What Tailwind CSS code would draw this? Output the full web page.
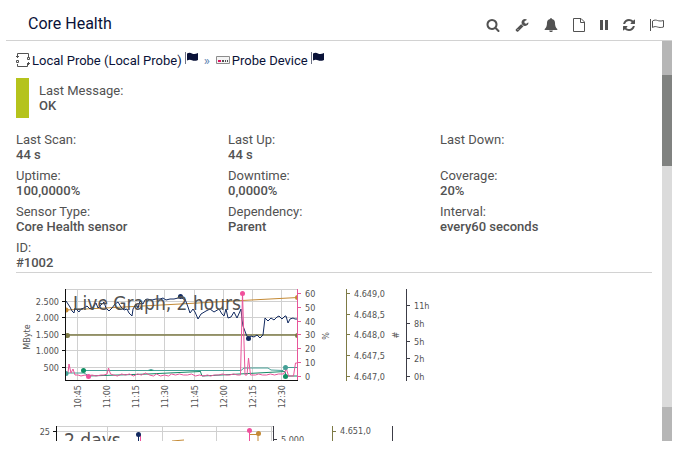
<!DOCTYPE html>
<html lang="en">
<head>
    <meta charset="UTF-8">
    <meta name="viewport" content="width=device-width, initial-scale=1.0">
    <title>Core Health</title>
    <script src="https://cdn.jsdelivr.net/npm/@tailwindcss/browser@4"></script>
</head>
<body class="bg-white h-screen flex flex-col px-[6px] pb-[10px] overflow-hidden font-['Roboto',sans-serif] text-[13px] leading-[15px] text-[#525252]">
    <header class="flex items-center justify-between shrink-0 h-[41px] pt-2 pl-[22px] pr-2 border-b border-[#d2d2d2]">
        <h1 class="text-base text-[#0a1238]">Core Health</h1>
        <div class="flex items-center gap-[15px] pt-[2px]">
            <button type="button" aria-label="Search">
                <svg class="w-[14px] h-[14px]" viewBox="0 0 1792 1792" fill="currentColor"><path d="M1216 832q0-185-131.5-316.5t-316.5-131.5-316.5 131.5-131.5 316.5 131.5 316.5 316.5 131.5 316.5-131.5 131.5-316.5zm512 832q0 52-38 90t-90 38q-54 0-90-38l-343-342q-179 124-399 124-143 0-273.5-55.5t-225-150-150-225-55.5-273.5 55.5-273.5 150-225 225-150 273.5-55.5 273.5 55.5 225 150 150 225 55.5 273.5q0 220-124 399l343 343q37 37 37 90z"/></svg>
            </button>
            <button type="button" aria-label="Settings">
                <svg class="w-[14px] h-[14px]" viewBox="0 0 1792 1792" fill="currentColor"><path d="M448 1472q0-26-19-45t-45-19-45 19-19 45 19 45 45 19 45-19 19-45zm644-420l-682 682q-37 37-90 37-52 0-91-37l-106-108q-38-36-38-90 0-53 38-91l681-681q39 98 114.5 173.5t173.5 114.5zm634-435q0 39-23 106-47 134-164.5 217.5t-258.5 83.5q-185 0-316.5-131.5t-131.5-316.5 131.5-316.5 316.5-131.5q58 0 121.5 16.5t107.5 46.5q16 11 16 28t-16 28l-293 169v224l193 107q5-3 79-48.5t135.5-81 70.5-35.5q15 0 23.5 10t8.5 25z"/></svg>
            </button>
            <button type="button" aria-label="Notifications">
                <svg class="w-[14px] h-[14px]" viewBox="0 0 14 14" fill="currentColor"><path d="M7 0c.6 0 .9.4.9.9 2 .4 3.1 1.9 3.1 3.9 0 3 .6 5 2.5 6.4 0 .5-.3.8-.8.8H1.3c-.5 0-.8-.3-.8-.8C2.4 9.800 3 7.800 3 4.800c0-2 1.100-3.500 3.100-3.900C6.100.4 6.400 0 7 0zM5.200 12.500h3.600c0 1-.8 1.500-1.800 1.500s-1.800-.5-1.800-1.500z"/></svg>
            </button>
            <button type="button" aria-label="Report">
                <svg class="w-[12px] h-[14px]" viewBox="0 0 12 14" fill="none" stroke="currentColor"><path d="M.5.5h7.500l3.500 3.500v9.500H.5zM7.500.5v4h4"/></svg>
            </button>
            <button type="button" aria-label="Pause">
                <svg class="w-[8px] h-[14px]" viewBox="0 0 8 14" fill="currentColor"><path d="M0 2h3v10H0zM5 2h3v10H5z"/></svg>
            </button>
            <button type="button" aria-label="Refresh">
                <svg class="w-[12px] h-[14px]" viewBox="128 0 1536 1792" fill="currentColor"><path d="M1639 1056q0 5-1 7-64 268-268 434.5t-478 166.5q-146 0-282.5-55t-243.5-157l-129 129q-19 19-45 19t-45-19-19-45v-448q0-26 19-45t45-19h448q26 0 45 19t19 45-19 45l-137 137q71 66 161 102t187 36q134 0 250-65t186-179q11-17 53-117 8-23 30-23h192q13 0 22.5 9.5t9.5 22.5zm25-800v448q0 26-19 45t-45 19h-448q-26 0-45-19t-19-45 19-45l138-138q-148-137-349-137-134 0-250 65t-186 179q-11 17-53 117-8 23-30 23h-199q-13 0-22.5-9.5t-9.5-22.5v-7q65-268 270-434.5t480-166.5q146 0 284 55.5t245 156.5l130-129q19-19 45-19t45 19 19 45z"/></svg>
            </button>
            <button type="button" aria-label="Flag">
                <svg class="w-[14px] h-[14px]" viewBox="0 0 14 14" fill="none" stroke="currentColor"><path d="M.5 1v12"/><path d="M2.500 3c2-1.300 3.500-1 5-.5s3.500.8 6 0v6.500c-2.500.8-4.500.5-6 0s-3-.8-5 .5z"/></svg>
            </button>
        </div>
    </header>

    <div class="flex flex-1 min-h-0">
        <main class="flex-1 min-w-0 overflow-hidden px-[10px] pt-[11px]">
            <nav class="flex items-center h-4 text-[#0a1238]" aria-label="Breadcrumb">
                <svg class="w-[14px] h-[14px] mr-[2px]" viewBox="0 0 14 14" fill="none" stroke="#525252"><path d="M1.500 3V.5h11V4M1.500 11v2.500h10V11"/><path d="M0 3.500h3M1.500 2v3M.5 7.500h2v2h-2zM11.500 4.500h2v2h-2zM11 10.500h3M12.500 9v3"/></svg>
                <a href="#">Local Probe (Local Probe)</a>
                <svg class="w-[13px] h-[12px] ml-[3px] mb-1" viewBox="0 0 13 12"><path d="M0 0h1v12H0z" fill="#6d7285"/><path d="M2 1.500c2-1 3.500-.8 5 0s3.500.8 6-.5v7c-2.500 1.200-4.500 1-6 .3s-3-.8-5 .2z" fill="#0a1238"/></svg>
                <span class="mx-[6px] text-[#5b7fb0]">»</span>
                <svg class="w-[14px] h-[8px] mr-[2px]" viewBox="0 0 14 8"><path d="M.5.5h13v7H.5z" fill="#f4f4f4" stroke="#8c8c8c"/><path d="M2 4h3v2H2z" fill="#e0115f"/><path d="M6 4h2v2H6zM9 4h1v2H9zM11 4h1v2h-1z" fill="#525252"/></svg>
                <a href="#">Probe Device</a>
                <svg class="w-[13px] h-[12px] ml-[3px] mb-1" viewBox="0 0 13 12"><path d="M0 0h1v12H0z" fill="#6d7285"/><path d="M2 1.500c2-1 3.500-.8 5 0s3.500.8 6-.5v7c-2.500 1.200-4.500 1-6 .3s-3-.8-5 .2z" fill="#0a1238"/></svg>
            </nav>

            <div class="flex items-center mt-[10px]">
                <div class="w-[13px] h-10 bg-[#b5c31c] mr-[10px]"></div>
                <div>
                    <p>Last Message:</p>
                    <p class="font-medium">OK</p>
                </div>
            </div>

            <dl class="grid grid-cols-3 gap-y-[6px] mt-[14px] pb-[2px] border-b border-[#d2d2d2]">
                <div><dt>Last Scan:</dt><dd class="font-medium">44 s</dd></div>
                <div><dt>Last Up:</dt><dd class="font-medium">44 s</dd></div>
                <div><dt>Last Down:</dt><dd class="font-medium"></dd></div>
                <div><dt>Uptime:</dt><dd class="font-medium">100,0000%</dd></div>
                <div><dt>Downtime:</dt><dd class="font-medium">0,0000%</dd></div>
                <div><dt>Coverage:</dt><dd class="font-medium">20%</dd></div>
                <div><dt>Sensor Type:</dt><dd class="font-medium">Core Health sensor</dd></div>
                <div><dt>Dependency:</dt><dd class="font-medium">Parent</dd></div>
                <div><dt>Interval:</dt><dd class="font-medium">every60 seconds</dd></div>
                <div><dt>ID:</dt><dd class="font-medium">#1002</dd></div>
            </dl>

            <!-- Live graph -->
            <svg class="block mt-2 w-[420px] h-[136px] font-['DejaVu_Sans_Condensed','DejaVu_Sans',sans-serif] text-[9px]" viewBox="16 281 420 136" fill="#525252">
                <clipPath id="livePlot"><path d="M66 289h232v92H66z"/></clipPath>
                <path d="M66 289.500h232M66 301.500h232M66 317.500h232M66 334.500h232M66 350.500h232M66 367.500h232M77.500 289v91M106.500 289v91M135.500 289v91M164.500 289v91M194.500 289v91M223.500 289v91M252.500 289v91M281.500 289v91" stroke="#d0d0d0" fill="none"/>
                <g clip-path="url(#livePlot)" fill="none">
                    <path d="M66 335h232" stroke="#7d7a45" stroke-width="1.500"/>
                    <path d="M66 310L105 308 180 304 242 300.500 298 297.500" stroke="#c48a35"/>
                    <path d="M66 301l2 3 2 3 2 4 2 2 1-5 2 2 2 2 2-3 3-1 3-2 3 3 3-2 3-4 2 5 3-3 3-3 2 6 3 3 3-3 3-4 3-2 3 5 3 3 3-1 2 4 3 3 1-7 3-5 2 4 2-7 3 3 2-4 2-1 5 1 4-1h4l3-1 3 2 4-1h4l4-1 3-2 2 3h2l3 8 2 6 3-4 2 3 3 7 3-5 5-3 4-2 4 3 5-3 3 5 2 2 2-7 2 9 3-1 3-5 3 6 4-9 1 11 1 6 3 8 2 4 3-2 3 1 3-2 3 3 3-3 2-17 3 3 3-3 3 2 3-3 2-1 3 3 3-3 1 0 2 7 2-4 3-1 2 1h4" stroke="#122a60"/>
                    <path d="M84 370.500h116l2 5.500 10-.5 73-4 1 4.500h12M88 376l60-2 52-2.500" stroke="#158a66"/>
                    <path d="M66 373h18l5 3M84 370.500h64l3-1 3 1h87l3-2.500h24l3 2 12 .5 3-3h12" stroke="#45a096"/>
                    <path d="M66 373h2l1-9 2 9 2-4 2 6h3l3 1 4-1 3 1 4-1 4 1 5-1 3 0 3-1 1.500-6 2 6 3 1 4 1 4-2 4 1 4-1 4 2 4-2 4 1 4-2 4 2 4 1 3-2 4 2 4-1 4 1 3-2 4 1 4-1 4 1 4 0 4-1 4 2 4-1 4 1 4-1 3 1 4-1 4 0 4-1 4 1 3 0 4-1 4 1 3 0L242.500 293 245 375h2l1.500-17 2 17 5 0 3-1 4 1 4 0 4-1 4 1 4-1 5 0 3-5 2 7 5 0 2-13h4" stroke="#e8569a"/>
                    <g fill="#c48a35"><circle cx="66" cy="310" r="2.500"/><circle cx="297.500" cy="297.500" r="2.500"/></g>
                    <g fill="#7d7a45"><circle cx="67.500" cy="335.500" r="2.500"/><circle cx="297.500" cy="335.500" r="2.500"/></g>
                    <g fill="#122a60"><circle cx="180.500" cy="296.500" r="2.500"/><circle cx="248.500" cy="338.500" r="2.500"/></g>
                    <g fill="#45a096"><circle cx="66" cy="373.500" r="2.500"/><circle cx="285.500" cy="367.500" r="2.500"/></g>
                    <g fill="#0f8f63"><circle cx="83.500" cy="370.500" r="2.500"/><circle cx="285.500" cy="376.500" r="2.500"/></g>
                    <g fill="#f0509c"><circle cx="88.500" cy="376.500" r="2.500"/><circle cx="242.500" cy="293.500" r="2.500"/></g>
                </g>
                <path d="M65.500 289v92M62 301.500h3M62 317.500h3M62 334.500h3M62 350.500h3M62 367.500h3M65 380.500h233" stroke="#111" fill="none"/>
                <path d="M297.500 289v91M298 293.500h3M298 307.500h3M298 321.500h3M298 334.500h3M298 348.500h3M298 362.500h3M298 376.500h3" stroke="#e8569a" fill="none"/>
                <path d="M346.500 289v92M347 293.500h3M347 314.500h3M347 334.500h3M347 355.500h3M347 376.500h3" stroke="#7d7a45" fill="none"/>
                <path d="M406.500 289v92M407 305.500h3M407 323.500h3M407 341.500h3M407 358.500h3M407 376.500h3" stroke="#3c3c46" fill="none"/>
                <text class="text-[19px]" x="73" y="310">Live Graph, 2 hours</text>
                <g text-anchor="end">
                    <text x="59" y="305">2.500</text>
                    <text x="59" y="321">2.000</text>
                    <text x="59" y="338">1.500</text>
                    <text x="59" y="354">1.000</text>
                    <text x="59" y="371">500</text>
                    <text transform="translate(81 385) rotate(-90)">10:45</text>
                    <text transform="translate(110 385) rotate(-90)">11:00</text>
                    <text transform="translate(139 385) rotate(-90)">11:15</text>
                    <text transform="translate(168 385) rotate(-90)">11:30</text>
                    <text transform="translate(198 385) rotate(-90)">11:45</text>
                    <text transform="translate(227 385) rotate(-90)">12:00</text>
                    <text transform="translate(256 385) rotate(-90)">12:15</text>
                    <text transform="translate(285 385) rotate(-90)">12:30</text>
                </g>
                <g text-anchor="middle">
                    <text transform="translate(30 337) rotate(-90)">MByte</text>
                    <text transform="translate(329 336) rotate(-90)">%</text>
                    <text transform="translate(399 335) rotate(-90)">#</text>
                </g>
                <text x="305" y="297">60</text>
                <text x="305" y="311">50</text>
                <text x="305" y="325">40</text>
                <text x="305" y="338">30</text>
                <text x="305" y="352">20</text>
                <text x="305" y="366">10</text>
                <text x="305" y="380">0</text>
                <text x="354" y="297">4.649,0</text>
                <text x="354" y="318">4.648,5</text>
                <text x="354" y="338">4.648,0</text>
                <text x="354" y="359">4.647,5</text>
                <text x="354" y="380">4.647,0</text>
                <text x="414" y="309">11h</text>
                <text x="414" y="327">8h</text>
                <text x="414" y="345">5h</text>
                <text x="414" y="362">2h</text>
                <text x="414" y="380">0h</text>
            </svg>

            <!-- 2 days graph -->
            <svg class="block w-[420px] h-[136px] font-['DejaVu_Sans_Condensed','DejaVu_Sans',sans-serif] text-[9px]" viewBox="16 417 420 136" fill="#525252">
                <path d="M57 426.500h216M57 431.500h216M107.500 426v92M162.500 426v92M216.500 426v92M271.500 426v92" stroke="#d0d0d0" fill="none"/>
                <path d="M56.500 426v92M53 431.500h3" stroke="#111" fill="none"/>
                <path d="M273.500 426v92M274 439.500h3M392.500 426v92" stroke="#3c3c46" fill="none"/>
                <path d="M332.500 426v92M333 431.500h3" stroke="#7d7a45" fill="none"/>
                <path d="M172 441l12-1M249 434.500h9v30" stroke="#c48a35" fill="none"/>
                <path d="M138.500 435v30" stroke="#122a60" fill="none"/>
                <path d="M140.500 435v30M249.500 431v30" stroke="#f0509c" fill="none"/>
                <circle cx="138.500" cy="434.500" r="2.500" fill="#122a60"/>
                <circle cx="249.500" cy="430.500" r="2.500" fill="#f0509c"/>
                <circle cx="258.500" cy="433.500" r="2.500" fill="#c48a35"/>
                <text class="text-[19px]" x="64" y="447">2 days</text>
                <text x="50" y="435" text-anchor="end">25</text>
                <text x="281" y="443">5.000</text>
                <text x="340" y="434">4.651,0</text>
            </svg>
        </main>

        <!-- Scrollbar -->
        <div class="flex flex-col w-[10px] shrink-0" aria-hidden="true">
            <div class="h-[34px] bg-[#b6b6b6]"></div>
            <div class="h-[91px] bg-[#808280]"></div>
            <div class="flex-1 bg-[#dbdbdb]"></div>
            <div class="h-[34px] bg-[#b6b6b6]"></div>
        </div>
    </div>
</body>
</html>
